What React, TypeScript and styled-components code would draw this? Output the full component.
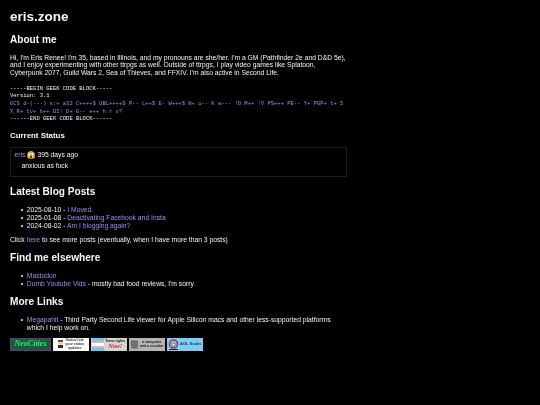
import React from 'react'
import styled, {createGlobalStyle} from 'styled-components'

const GlobalStyle = createGlobalStyle`
    html, body {
        margin: 0;
        background: #000;
    }
    body {
        color: #f4f4f4;
        font-family: "Liberation Sans", Arial, sans-serif;
        font-size: 6.75px;
        line-height: 7.75px;
    }
`

// the reference is a downscaled capture, so everything is slightly soft
const Page = styled.main`
    width: 337px;
    min-height: 395px;
    padding: 10px 0 0 10px;
    filter: blur(0.3px);
`

const SiteTitle = styled.h1`
    font-size: 13.5px;
    line-height: 13px;
    font-weight: 700;
    color: #f8f8f8;
    margin: 0 0 10.5px;
`

const SubTitle = styled.h3`
    font-size: 7.9px;
    line-height: 9px;
    font-weight: 700;
    color: #f8f8f8;
    margin: 0 0 7.5px;
`

const Paragraph = styled.p`
    margin: 0 0 8px;
`

const Link = styled.a`
    color: #9f90f0;
    text-decoration: none;
`

const GeekCode = styled.pre`
    font-family: "Liberation Mono", "Courier New", monospace;
    font-size: 5.5px;
    line-height: 7.6px;
    margin: 0 0 8px;
    white-space: pre-wrap;
`

const StatusBox = styled.div`
    border: 1px solid #1e1e1e;
    padding: 3px 3.5px 6.5px;
    margin-bottom: 9px;
`

const StatusHeader = styled.div`
    display: flex;
    align-items: center;
    gap: 2px;
    height: 8px;
`

const StatusBody = styled.div`
    margin: 3px 0 0 7px;
`

const List = styled.ul`
    margin: 0 0 6.5px;
    padding: 0 0 0 16.8px;

    & > li::marker {
        content: "•  ";
    }
`

const SectionTitle = styled.h2`
    font-size: 10.1px;
    line-height: 12px;
    font-weight: 700;
    color: #f8f8f8;
    margin: 0 0 8px;

    ${List} + & {
        margin-top: 8.5px;
    }
`

const ButtonRow = styled.div`
    display: flex;
    align-items: center;
    gap: 1.5px;
    margin-top: 2.5px;
`

const Badge = styled.a<{$bg: string; $wide?: boolean}>`
    display: flex;
    align-items: center;
    justify-content: center;
    gap: 1px;
    box-sizing: border-box;
    width: ${props => (props.$wide ? '41px' : '36.5px')};
    height: 12.75px;
    background: ${props => props.$bg};
    overflow: hidden;
    flex: none;
`

const NeoCitiesBadge = styled(Badge)`
    border: 1px solid #7a2a96;
    font-family: "Liberation Serif", serif;
    font-style: italic;
    font-weight: 700;
    font-size: 8px;
    color: #3fe08a;
`

const BadgeLines = styled.span<{$color?: string; $size?: number}>`
    display: block;
    text-align: center;
    color: ${props => props.$color ?? '#222'};
    font-size: ${props => props.$size ?? 3.5}px;
    line-height: 4px;
    font-weight: 700;
`

const ShoutLine = styled.span`
    display: block;
    color: #d02020;
    font-family: "Liberation Serif", serif;
    font-style: italic;
    font-size: 6px;
    line-height: 6px;
`

const Flag = styled.span`
    display: block;
    width: 12px;
    height: 100%;
    flex: none;
    background: linear-gradient(#5bcefa 0 20%, #f5a9b8 20% 40%, #fff 40% 60%, #f5a9b8 60% 80%, #5bcefa 80%);
`

const ScreamEmoji = () => (
    <svg width="8" height="8" viewBox="0 0 16 16">
        <circle cx="8" cy="8" r="7.5" fill="#f5c33b" />
        <path d="M1.2 6C2 2 5 .5 8 .5S14 2 14.8 6C12 3.6 4 3.6 1.2 6Z" fill="#8fb6dd" />
        <ellipse cx="5" cy="7" rx="1.4" ry="1.7" fill="#fff" />
        <ellipse cx="11" cy="7" rx="1.4" ry="1.7" fill="#fff" />
        <ellipse cx="8" cy="11.5" rx="2" ry="3" fill="#5b2a12" />
        <path d="M.5 11c1-1.5 3-1.5 3.5.5l.5 3.5h-3C1 14 .5 12.500 .5 11ZM15.500 11c-1-1.500-3-1.500-3.500.5l-.5 3.500h3c1.500-1 1-2.500 1-4Z" fill="#f09a2a" />
    </svg>
)

const StatusCafeIcon = () => (
    <svg width="7" height="10" viewBox="0 0 7 10">
        <rect x="1" y="1" width="5" height="2" fill="#6b4a2a" />
        <rect x="1" y="3.500" width="5" height="2" fill="#d8c8a8" />
        <rect x="1" y="6" width="5" height="3" fill="#3a2a1a" />
    </svg>
)

const ComputerIcon = () => (
    <svg width="9" height="9" viewBox="0 0 9 9">
        <rect x="1.500" y="1" width="6" height="5" fill="#777" stroke="#444" strokeWidth=".6" />
        <path d="M.5 8.500 2 6.500h5l1.500 2Z" fill="#666" />
    </svg>
)

const AolIcon = () => (
    <svg width="11" height="12" viewBox="0 0 11 12">
        <circle cx="5.500" cy="6" r="4" fill="none" stroke="#b03050" strokeWidth="1.600" />
        <circle cx="5.500" cy="6.500" r="1.600" fill="#fff" stroke="#223" strokeWidth=".6" />
        <path d="M1 11.500h9" stroke="#223" strokeWidth="1" />
    </svg>
)

const App = () => {
    return (
        <Page>
            <GlobalStyle />
            <SiteTitle>eris.zone</SiteTitle>

            <SectionTitle>About me</SectionTitle>
            <Paragraph>
                Hi, I'm Eris Renee! I'm 35, based in Illinois, and my pronouns are she/her. I'm a GM (Pathfinder 2e and D&amp;D 5e),
                and I enjoy experimenting with other ttrpgs as well. Outside of ttrpgs, I play video games like Splatoon,
                Cyberpunk 2077, Guild Wars 2, Sea of Thieves, and FFXIV. I'm also active in Second Life.
            </Paragraph>
            <GeekCode>
                -----BEGIN GEEK CODE BLOCK-----{'\n'}
                Version: 3.1{'\n'}
                <Link href="#">GCS d-(---) s:+ a32 C++++$ UBL++++$ P-- L++$ E- W+++$ N+ o-- K w--- !O M++ !V PS+++ PE-- Y+ PGP+ t+ 5 X R+ tv+ b++ DI! D+ G-- e++ h r x?</Link>{'\n'}
                ------END GEEK CODE BLOCK------
            </GeekCode>

            <SubTitle>Current Status</SubTitle>
            <StatusBox>
                <StatusHeader>
                    <Link href="#">eris</Link>
                    <ScreamEmoji />
                    <span>395 days ago</span>
                </StatusHeader>
                <StatusBody>anxious as fuck</StatusBody>
            </StatusBox>

            <SectionTitle>Latest Blog Posts</SectionTitle>
            <List>
                <li>2025-08-10 - <Link href="#">I Moved.</Link></li>
                <li>2025-01-08 - <Link href="#">Deactivating Facebook and Insta</Link></li>
                <li>2024-08-02 - <Link href="#">Am I blogging again?</Link></li>
            </List>
            <Paragraph>Click <Link href="#">here</Link> to see more posts (eventually, when I have more than 3 posts)</Paragraph>

            <SectionTitle>Find me elsewhere</SectionTitle>
            <List>
                <li><Link href="#">Mastodon</Link></li>
                <li><Link href="#">Dumb Youtube Vids</Link> - mostly bad food reviews, I'm sorry</li>
            </List>

            <SectionTitle>More Links</SectionTitle>
            <List>
                <li><Link href="#">Megapahit</Link> - Third Party Second Life viewer for Apple Silicon macs and other less-supported platforms which I help work on.</li>
            </List>

            <ButtonRow>
                <NeoCitiesBadge $bg="#12602f" $wide>NeoCities</NeoCitiesBadge>
                <Badge $bg="#fff">
                    <StatusCafeIcon />
                    <BadgeLines $color="#334">StatusCafe<br />your status<br />updates</BadgeLines>
                </Badge>
                <Badge $bg="#d4d4d4">
                    <Flag />
                    <BadgeLines>Trans rights<ShoutLine>Now!</ShoutLine></BadgeLines>
                </Badge>
                <Badge $bg="#b4b4b4">
                    <ComputerIcon />
                    <BadgeLines $size={3.6}>a computer<br />and a monitor</BadgeLines>
                </Badge>
                <Badge $bg="#7fcdf5">
                    <AolIcon />
                    <BadgeLines $color="#1a2a55" $size={4}>AOL Sucks</BadgeLines>
                </Badge>
            </ButtonRow>
        </Page>
    )
}

export default App
